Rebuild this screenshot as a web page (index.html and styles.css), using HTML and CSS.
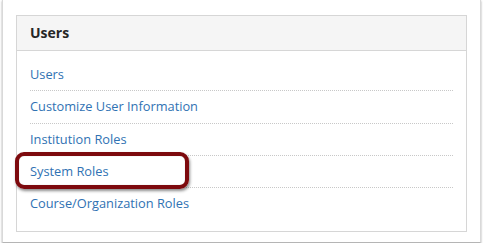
FILE: index.html
```html
<!DOCTYPE html>
<html lang="en">
<head>
  <meta charset="UTF-8" />
  <title>Users</title>
  <link rel="stylesheet" href="styles.css">
</head>
<body>
  <div class="frame">
    <div class="panel">
      <h2 class="panel-title">Users</h2>
      <ul class="links">
        <li><a href="#">Users</a></li>
        <li><a href="#">Customize User Information</a></li>
        <li><a href="#">Institution Roles</a></li>
        <li class="marked"><a href="#">System Roles</a><span class="callout"></span></li>
        <li><a href="#">Course/Organization Roles</a></li>
      </ul>
    </div>
  </div>
</body>
</html>
```

FILE: styles.css
```css
body {
  margin: 0;
  background-color: #fff;
  font-family: 'Open Sans', sans-serif;
}
.frame {
  margin: 0 2px;
  height: 243px;
  box-sizing: border-box;
  padding: 15px 13px 0 13px;
  background-color: #fff;
  border-left: 1px solid #d9d9d9;
  border-right: 1px solid #d9d9d9;
  border-bottom: 1px solid #b5b5b5;
  box-shadow: 0 1px 2px rgba(0,0,0,0.35);
}
.panel {
  border: 1px solid #d6d6d6;
  height: 217px;
  box-sizing: border-box;
}
.panel-title {
  margin: 0;
  height: 35px;
  box-sizing: border-box;
  padding: 0 13px;
  line-height: 34px;
  font-size: 14px;
  font-weight: 700;
  color: #262626;
  background-color: #f5f5f5;
  border-bottom: 1px solid #d6d6d6;
}
.links {
  list-style: none;
  margin: 0 13px;
  padding: 8px 0 0;
}
.links li {
  position: relative;
  height: 31.33px;
  line-height: 31.33px;
  font-size: 12.8px;
  border-bottom: 1px dotted #c8c8c8;
}
.links li:last-child {
  border-bottom: none;
}
.links a {
  color: #3072b3;
  text-decoration: none;
}
.callout {
  position: absolute;
  left: -15px;
  top: -4px;
  width: 174px;
  height: 37px;
  box-sizing: border-box;
  border: 4px solid #7d0a0e;
  border-radius: 9px;
  box-shadow: 1px 2px 3px rgba(0,0,0,0.45), inset 0 0 1px rgba(0,0,0,0.3);
}
```
